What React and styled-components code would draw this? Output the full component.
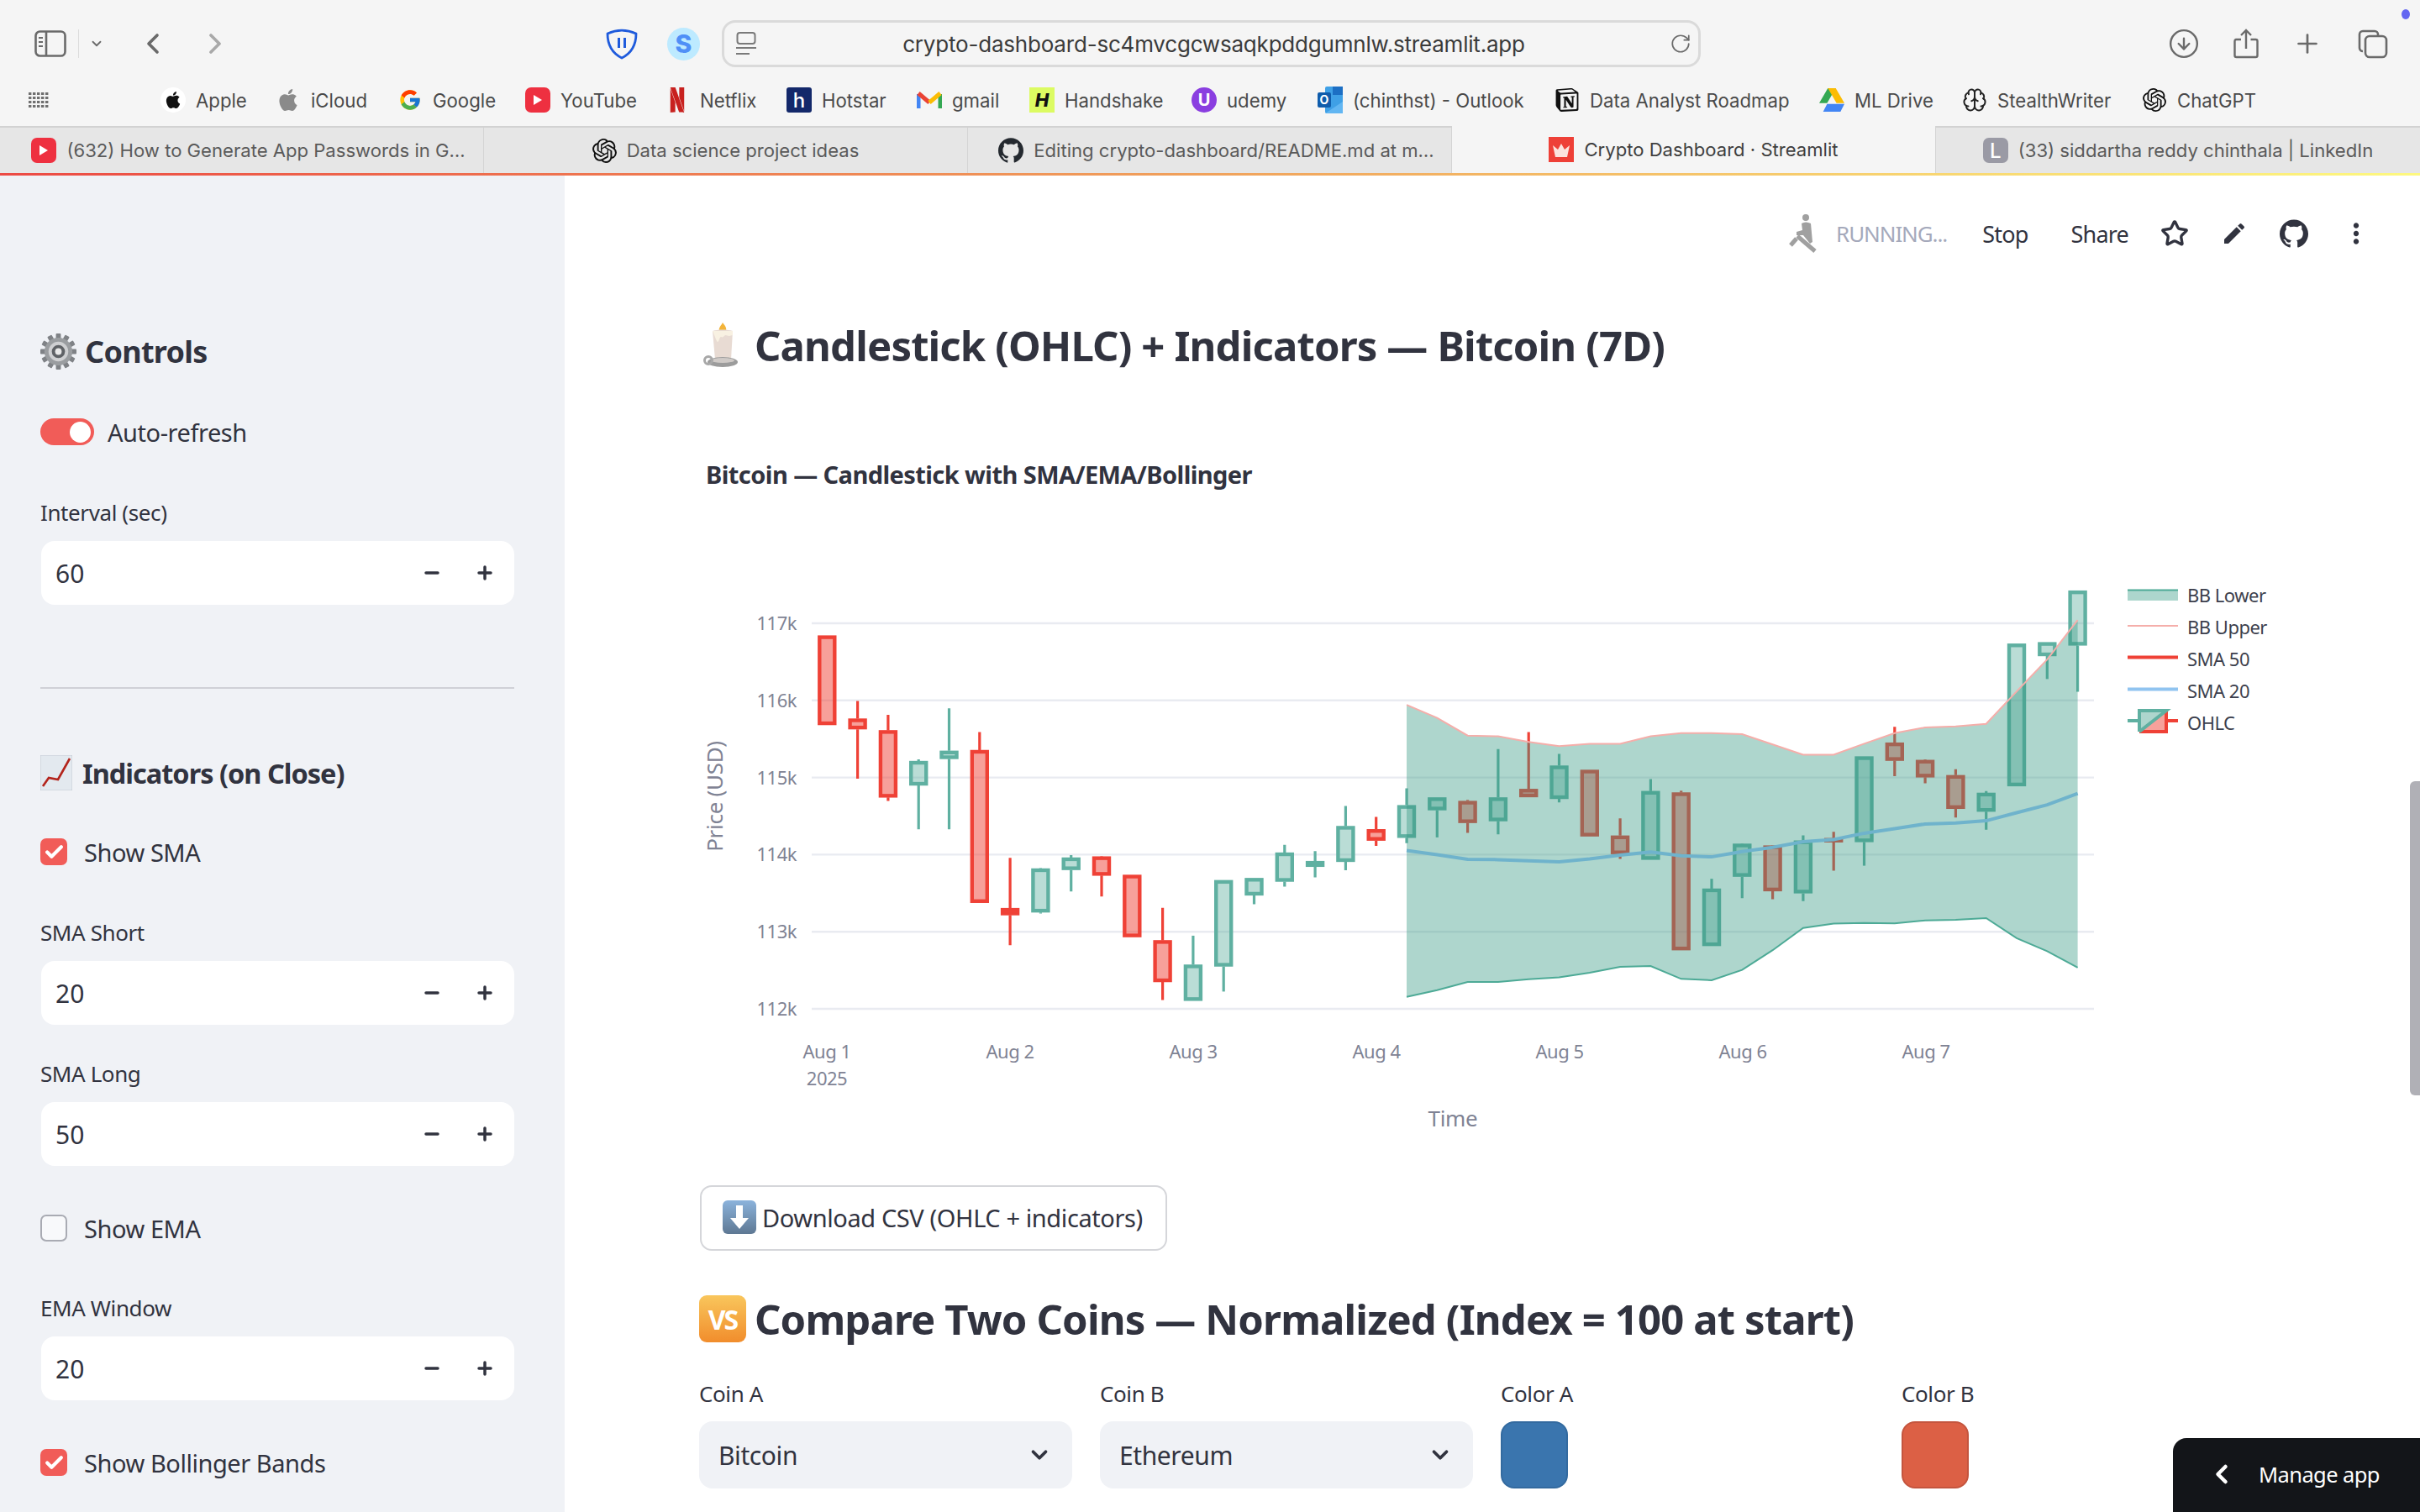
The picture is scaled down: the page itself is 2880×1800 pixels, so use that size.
import React from 'react'
import styled, { createGlobalStyle } from 'styled-components'
import { Star, Minus, Plus, ChevronDown, ChevronLeft, ChevronRight, RotateCw, CircleArrowDown, Brain, Check } from 'lucide-react'
import { SiApple, SiNetflix, SiNotion, SiOpenai, SiGithub } from 'react-icons/si'
import { FcGoogle } from 'react-icons/fc'
import { MdEdit, MdMoreVert } from 'react-icons/md'

const SANS = '"Noto Sans", "Open Sans", sans-serif'
const UI = 'Inter, "Liberation Sans", sans-serif'

const GlobalStyle = createGlobalStyle`
  html, body { margin: 0; padding: 0; background: #fff; overflow: hidden; }
  body { font-family: ${SANS}; color: #31333f; }
  * { box-sizing: border-box; }
`

const Page = styled.div`
  position: relative;
  width: 2880px;
  height: 1800px;
  overflow: hidden;
  display: flex;
  flex-direction: column;
`

/* browser chrome */
const Chrome = styled.div`
  background: #f5f5f5;
  font-family: ${UI};
`
const Toolbar = styled.div`
  height: 96px;
  padding: 8px 0 0 41px;
  display: flex;
  align-items: center;
`
const Slot = styled.div`
  margin-left: ${p => p.$ml || 0}px;
  display: flex;
  align-items: center;
  justify-content: ${p => (p.$end ? 'flex-end' : 'flex-start')};
  color: ${p => p.$color || '#6a6a6a'};
`
const VLine = styled.div`
  width: 1px;
  height: 34px;
  margin-left: 14px;
  background: #dcdcdc;
`
const SCircle = styled.div`
  width: 39px;
  height: 39px;
  border-radius: 50%;
  background: #bdeaff;
  color: #4f8ff7;
  font: 800 30px ${UI};
  display: flex;
  align-items: center;
  justify-content: center;
`
const AddressBar = styled.div`
  width: 1165px;
  height: 56px;
  margin-left: 26px;
  border: 3px solid #dadada;
  border-radius: 16px;
  display: grid;
  grid-template-columns: 40px 1fr 40px;
  align-items: center;
  padding: 0 8px 0 14px;
`
const Url = styled.div`
  text-align: center;
  font-size: 26px;
  letter-spacing: -0.2px;
  color: #3b3b3b;
`
const Bookmarks = styled.div`
  height: 54px;
  padding: 0 0 8px 34px;
  display: flex;
  align-items: center;
`
const Mark = styled.div`
  width: ${p => p.$w}px;
  display: flex;
  align-items: center;
  gap: 12px;
  font-size: 22.2px;
  color: #4a4a4a;
  white-space: nowrap;
`
const MarkIcon = styled.div`
  width: 30px;
  height: 32px;
  flex: none;
  display: flex;
  align-items: center;
  justify-content: center;
`
const AppleDot = styled.div`
  width: 30px;
  height: 30px;
  border-radius: 50%;
  background: #fff;
  color: #111;
  display: flex;
  align-items: center;
  justify-content: center;
`
const LetterTile = styled.div`
  width: ${p => p.$size || 30}px;
  height: ${p => p.$size || 30}px;
  border-radius: ${p => p.$round || '3px'};
  background: ${p => p.$bg};
  color: ${p => p.$fg || '#fff'};
  font: ${p => p.$font || '500 24px ' + UI};
  display: flex;
  align-items: center;
  justify-content: center;
  flex: none;
`
const Tabs = styled.div`
  display: flex;
  height: 56px;
`
const Tab = styled.div`
  flex: 0 0 576px;
  min-width: 0;
  display: flex;
  align-items: center;
  justify-content: center;
  gap: 12px;
  padding-left: ${p => (p.$shifted ? 16 : 0)}px;
  font-size: 22.1px;
  white-space: nowrap;
  color: ${p => (p.$active ? '#3f3f3f' : '#5a5a5a')};
  background: ${p => (p.$active ? '#f5f5f5' : '#e6e6e6')};
  border-top: ${p => (p.$active ? 'none' : '2px solid #d2d2d2')};
  border-right: 1px solid #d4d4d4;
  &:last-child { border-right: none; }
`
const Decoration = styled.div`
  height: 3px;
  background: linear-gradient(90deg, #ec4a44, #f0a25c 50%, #fdf880);
`

/* streamlit shell */
const Shell = styled.div`
  flex: 1;
  display: flex;
  min-height: 0;
`
const Sidebar = styled.aside`
  width: 672px;
  flex: none;
  padding: 185px 60px 0 48px;
  background: #f0f2f6;
`
const SideHeading = styled.h3`
  margin: ${p => p.$mt || 0}px 0 0;
  height: 48px;
  display: flex;
  align-items: center;
  gap: ${p => p.$gap || 8}px;
  font-size: ${p => p.$size}px;
  font-weight: 700;
  letter-spacing: ${p => p.$ls}px;
`
const ToggleRow = styled.div`
  margin-top: 54px;
  height: 36px;
  display: flex;
  align-items: center;
  gap: 16px;
  font-size: 29px;
  letter-spacing: -0.45px;
`
const ToggleTrack = styled.div`
  width: 64px;
  height: 32px;
  border-radius: 16px;
  background: #f15c58;
  display: flex;
  justify-content: flex-end;
  align-items: center;
  padding-right: 4px;
`
const ToggleThumb = styled.div`
  width: 25px;
  height: 25px;
  border-radius: 50%;
  background: #fff;
`
const FieldLabel = styled.div`
  margin-top: ${p => p.$mt || 0}px;
  height: 36px;
  line-height: 35px;
  font-size: 26px;
  letter-spacing: -0.4px;
`
const NumberBox = styled.div`
  margin: 15px 0 0 1px;
  height: 76px;
  border-radius: 16px;
  background: #fff;
  display: flex;
  align-items: center;
  padding: 0 23px 0 17px;
  font-size: 30px;
`
const NumberValue = styled.div`
  flex: 1;
`
const StepButtons = styled.div`
  display: flex;
  gap: 39px;
  color: #31333f;
`
const Rule = styled.hr`
  margin: 98px 0 0;
  border: none;
  height: 2px;
  background: #cfd0d6;
`
const CheckRow = styled.div`
  margin-top: ${p => p.$mt || 0}px;
  height: 36px;
  display: flex;
  align-items: center;
  gap: 20px;
  font-size: 29px;
  letter-spacing: -0.45px;
`
const CheckBox = styled.div`
  width: 32px;
  height: 32px;
  border-radius: 7px;
  flex: none;
  display: flex;
  align-items: center;
  justify-content: center;
  color: #fff;
  background: ${p => (p.$on ? '#f15c58' : '#f8f9fb')};
  border: ${p => (p.$on ? 'none' : '2px solid #a9abb3')};
`
const Main = styled.main`
  flex: 1;
  min-width: 0;
  padding: 41px 0 0 160px;
`
const StatusBar = styled.div`
  height: 56px;
  display: flex;
  align-items: center;
  justify-content: flex-end;
  padding-right: 57px;
  font-size: 27px;
  letter-spacing: -0.8px;
`
const RunningText = styled.span`
  margin: 0 42px 0 21px;
  color: #a5a9bb;
  font-size: 26px;
  letter-spacing: -1.1px;
`
const BarAction = styled.span`
  margin-left: ${p => p.$ml || 0}px;
  display: flex;
  align-items: center;
`
const H2 = styled.h2`
  margin: ${p => p.$mt || 0}px 0 0;
  height: 70px;
  display: flex;
  align-items: center;
  gap: ${p => p.$gap || 10}px;
  font-size: 49px;
  font-weight: 700;
  letter-spacing: -0.85px;
  white-space: nowrap;
`
const EmojiSlot = styled.span`
  margin-left: ${p => p.$ml || 0}px;
  display: flex;
`
const ChartSvg = styled.svg`
  display: block;
  margin-top: 94px;
  width: 1888px;
  height: 810px;
  font-family: ${SANS};
`
const DownloadButton = styled.div`
  margin: 61px 0 0 1px;
  width: 556px;
  height: 78px;
  border: 2px solid #d5d6da;
  border-radius: 14px;
  display: flex;
  align-items: center;
  padding: 0 0 2px 25px;
  gap: 7px;
  font-size: 29px;
  letter-spacing: -0.4px;
  white-space: nowrap;
`
const PickerGrid = styled.div`
  margin-top: 38px;
  display: grid;
  grid-template-columns: repeat(4, 444px);
  column-gap: 33px;
`
const PickerLabel = styled.div`
  height: 36px;
  line-height: 33px;
  font-size: 26px;
  letter-spacing: -0.4px;
`
const SelectBox = styled.div`
  margin-top: 13px;
  height: 80px;
  border-radius: 16px;
  background: #f0f2f6;
  display: flex;
  align-items: center;
  justify-content: space-between;
  padding: 0 24px 0 23px;
  font-size: 30px;
  letter-spacing: -0.4px;
`
const Swatch = styled.div`
  margin-top: 13px;
  width: 80px;
  height: 80px;
  border-radius: 16px;
  background: ${p => p.$color};
  border: 2px solid ${p => p.$edge};
`
const ManageApp = styled.div`
  position: absolute;
  right: 0;
  bottom: 0;
  width: 294px;
  height: 88px;
  padding: 0 0 2px 40px;
  border-top-left-radius: 16px;
  background: #131519;
  color: #fff;
  display: flex;
  align-items: center;
  gap: 26px;
  font-size: 25.5px;
  letter-spacing: -0.6px;
`
const ScrollThumb = styled.div`
  position: absolute;
  right: 0;
  top: 930px;
  width: 12px;
  height: 374px;
  border-radius: 6px 0 0 6px;
  background: #b0b0b6;
`
const NotifyDot = styled.div`
  position: absolute;
  top: 11px;
  right: 12px;
  width: 10px;
  height: 12px;
  border-radius: 50%;
  background: #6366f1;
`
const VsBadge = styled.div`
  width: 56px;
  height: 56px;
  flex: none;
  border-radius: 9px;
  background: linear-gradient(180deg, #f9c65c, #f18d2c);
  color: #fff;
  font-size: 32px;
  font-weight: 700;
  letter-spacing: -2px;
  display: flex;
  align-items: center;
  justify-content: center;
`

/* browser icons */
const SidebarGlyph = () => (
  <svg width="38" height="32" viewBox="0 0 38 32" fill="none" stroke="#6a6a6a" strokeWidth="2.6">
    <rect x="1.5" y="1.5" width="35" height="29" rx="5" />
    <path d="M14 2v28" />
    <path d="M5 9h5M5 14h5M5 19h5" strokeWidth="2" />
  </svg>
)
const ShieldGlyph = () => (
  <svg width="38" height="38" viewBox="0 0 38 38" fill="none" stroke="#1f5bdc" strokeWidth="2.8">
    <path d="M2 7C13 2 25 2 36 7 36 20 31 30 19 36 7 30 2 20 2 7z" strokeLinejoin="round" />
    <path d="M15.5 12v12M22.5 12v12" strokeWidth="3" />
  </svg>
)
const PageGlyph = () => (
  <svg width="24" height="28" viewBox="0 0 24 28" fill="none" stroke="#7a7a7a" strokeWidth="2">
    <rect x="1.5" y="1" width="21" height="13" rx="3" />
    <path d="M0 19h24M0 26h16" />
  </svg>
)
const ShareGlyph = () => (
  <svg width="30" height="36" viewBox="0 0 30 36" fill="none" stroke="#6a6a6a" strokeWidth="2.4">
    <path d="M9 13H3a2 2 0 0 0-1.5 2v17a2 2 0 0 0 2 2h23a2 2 0 0 0 2-2V15a2 2 0 0 0-2-2h-6" />
    <path d="M15 24V2M9 8l6-6 6 6" />
  </svg>
)
const TabsGlyph = () => (
  <svg width="36" height="35" viewBox="0 0 36 35" fill="none" stroke="#6a6a6a" strokeWidth="2.6">
    <path d="M6 26a4 4 0 0 1-4-4V6a4 4 0 0 1 4-4h14a4 4 0 0 1 4 4v2" />
    <rect x="9" y="8" width="25" height="25" rx="5" />
  </svg>
)
const GridGlyph = () => (
  <svg width="24" height="18" viewBox="0 0 24 18" fill="#6f6f6f">
    {[0, 5, 10, 15].map(y => [0, 5, 10, 15, 20].map(x => <rect key={x + '-' + y} x={x} y={y} width="3.4" height="3" />))}
  </svg>
)
const YouTubeTile = () => (
  <LetterTile $bg="#ee3040" $round="7px">
    <svg width="12" height="14" viewBox="0 0 12 14"><path d="M1 1l10 6-10 6z" fill="#fff" /></svg>
  </LetterTile>
)
const GmailGlyph = () => (
  <svg width="30" height="24" viewBox="0 0 30 24" fill="none">
    <path d="M2 22V5" stroke="#4285f4" strokeWidth="5" />
    <path d="M28 22V5" stroke="#34a853" strokeWidth="5" />
    <path d="M2 4l13 11" stroke="#ea4335" strokeWidth="5" />
    <path d="M28 4L15 15" stroke="#fbbc04" strokeWidth="5" />
  </svg>
)
const OutlookGlyph = () => (
  <svg width="30" height="32" viewBox="0 0 30 32">
    <rect x="9" y="0" width="21" height="32" rx="2" fill="#3fa0e6" />
    <rect x="18" y="0" width="12" height="10" fill="#1c6fc4" />
    <path d="M9 32l21-14v14z" fill="#62b6f2" />
    <rect x="0" y="7" width="16" height="18" rx="2" fill="#0f5cab" />
    <text x="8" y="21" fontSize="14" fontWeight="700" textAnchor="middle" fill="#fff">O</text>
  </svg>
)
const DriveGlyph = () => (
  <svg width="32" height="30" viewBox="0 0 32 30">
    <path d="M11 0h10L10 19H0z" fill="#34a853" />
    <path d="M21 0l11 19H22L11 0z" fill="#fbbc04" />
    <path d="M5 30l5-10h22l-5 10z" fill="#4285f4" />
  </svg>
)
const CrownTile = () => (
  <LetterTile $bg="#ee4037" $round="0">
    <svg width="24" height="22" viewBox="0 0 24 22"><path d="M12 4l4 7 6-5-3 14H5L2 6l6 5z" fill="#fbe3dd" /></svg>
  </LetterTile>
)
const GithubTab = () => <SiGithub size={30} color="#24292f" />

/* emoji stand-ins */
const GearEmoji = () => (
  <svg width="43" height="43" viewBox="0 0 44 44">
    <g fill="#7f8286">
      {[...Array(12)].map((_, i) => (
        <rect key={i} x="19" y="0" width="6" height="8" rx="1" transform={`rotate(${i * 30} 22 22)`} />
      ))}
    </g>
    <circle cx="22" cy="22" r="17" fill="#9a9da0" />
    <circle cx="22" cy="22" r="12" fill="#cfd0d2" />
    <circle cx="22" cy="22" r="8" fill="#5f6266" />
    <circle cx="22" cy="22" r="4" fill="#e9e9e9" />
  </svg>
)
const ChartEmoji = () => (
  <svg width="38" height="42" viewBox="0 0 38 42">
    <rect width="38" height="42" fill="#e3e9ef" />
    <path d="M0 0h38v42H0z" fill="none" stroke="#c3cad3" />
    <path d="M3 37l7-10 11 2L35 4" fill="none" stroke="#b3241c" strokeWidth="2.6" />
  </svg>
)
const CandleEmoji = () => (
  <svg width="42" height="56" viewBox="0 0 42 56">
    <path d="M23 1c3 4 5 6 4 10h-8c-1-4 2-6 4-10z" fill="#f3b43a" />
    <path d="M11 11c6-2 18-2 24 0l-2 34H14z" fill="#e8dbd3" />
    <path d="M11 11h24v5c-2 0-3 1-4 1-2 0-3-1-5-1-2 2-3 3-5 2-2 0-2 6-4 6-1 0-3-6-6-13z" fill="#f8f1e2" />
    <ellipse cx="23" cy="48" rx="18" ry="6" fill="#9c9c9c" />
    <ellipse cx="23" cy="46" rx="14" ry="3" fill="#cfcac7" />
    <circle cx="6" cy="46" r="4.5" fill="none" stroke="#a8a8a8" strokeWidth="3" />
  </svg>
)
const ArrowEmoji = () => (
  <svg width="40" height="40" viewBox="0 0 40 40">
    <defs>
      <linearGradient id="dl" x1="0" y1="0" x2="0" y2="1">
        <stop offset="0" stopColor="#8bb3dc" />
        <stop offset="1" stopColor="#5e7893" />
      </linearGradient>
    </defs>
    <rect width="40" height="40" rx="6" fill="url(#dl)" />
    <path d="M16 6h8v15h7L20 34 9 21h7z" fill="#fff" />
  </svg>
)
const RunnerGlyph = () => (
  <svg width="36" height="48" viewBox="0 0 36 48" fill="#a0a0a0" stroke="none">
    <circle cx="21" cy="5" r="4" />
    <path d="M16 12q5-3 11 0l2 22-3 2-8-10-8 0 0-4 7-2z" />
    <path d="M11 27l21 18M3 38l7-8" stroke="#a0a0a0" strokeWidth="5" fill="none" />
  </svg>
)

const yz = z => z / 2.376 + 680
const xi = i => 984.3 + 36.3 * i

// candles: [high, top, bottom, low, up?] read off the reference in crop rows
const CANDLES = [
  [182, 182, 435, 435, 0], [367, 417, 447, 587, 0], [406, 450, 640, 650, 0], [532, 537, 606, 730, 1],
  [388, 508, 531, 730, 1], [455, 506, 938, 938, 0], [811, 953, 973, 1058, 0], [840, 841, 965, 968, 1],
  [803, 810, 845, 906, 1], [806, 807, 861, 920, 0], [859, 859, 1035, 1035, 0], [952, 1044, 1162, 1213, 0],
  [1031, 1113, 1215, 1215, 1], [874, 874, 1118, 1189, 1], [868, 868, 917, 942, 1], [774, 796, 878, 892, 1],
  [792, 820, 836, 866, 1], [664, 721, 822, 846, 1], [695, 730, 762, 777, 0], [614, 662, 754, 769, 1],
  [640, 640, 676, 753, 1], [647, 650, 712, 740, 0], [503, 640, 707, 744, 1], [455, 616, 639, 639, 0],
  [517, 550, 644, 654, 1], [562, 562, 750, 750, 0], [699, 748, 800, 814, 0], [588, 622, 816, 816, 1],
  [621, 626, 1072, 1072, 0], [870, 898, 1060, 1060, 1], [770, 771, 864, 925, 1], [775, 776, 905, 928, 0],
  [747, 762, 911, 933, 1], [737, 755, 764, 847, 0], [524, 524, 766, 833, 1], [440, 485, 536, 580, 0],
  [532, 534, 583, 600, 0], [560, 577, 672, 697, 0], [622, 627, 680, 731, 1], [205, 205, 608, 608, 1],
  [201, 201, 240, 305, 1], [55, 55, 210, 341, 1],
]
const BB_UP = [378, 415, 465, 467, 483, 495, 488, 488, 467, 458, 458, 461, 490, 519, 519, 488, 458, 442, 439, 432, 340, 250, 138]
const BB_LOW = [1204, 1185, 1162, 1162, 1154, 1149, 1136, 1119, 1117, 1153, 1157, 1128, 1072, 1009, 997, 995, 996, 988, 986, 981, 1038, 1075, 1121]
const SMA20 = [790, 802, 815, 816, 819, 822, 814, 803, 794, 805, 808, 793, 781, 765, 759, 741, 728, 715, 712, 706, 683, 661, 629]
const line = arr => arr.map((z, k) => `${xi(k + 19).toFixed(1)},${yz(z).toFixed(1)}`).join(' ')
const bandPts = line(BB_UP) + ' ' + BB_LOW.map((z, k) => `${xi(k + 19).toFixed(1)},${yz(z).toFixed(1)}`).reverse().join(' ')

const GREEN = '#5fb0a1'
const RED = '#ef4136'
const TICK = '#7f8394'

const Candle = ({ i, d }) => {
  const [hi, top, bot, lo, up] = d
  const x = xi(i)
  const c = up ? GREEN : RED
  return (
    <g>
      <path d={`M${x} ${yz(hi)}V${yz(top)}M${x} ${yz(bot)}V${yz(lo)}`} stroke={c} strokeWidth="3.2" />
      <rect x={x - 9} y={yz(top) + 2} width="18" height={Math.max(yz(bot) - yz(top) - 4, 1)} stroke={c} strokeWidth="4.4"
        fill={up ? 'rgba(90,175,158,.42)' : 'rgba(239,65,54,.5)'} />
    </g>
  )
}

const PriceChart = () => {
  const prices = [117, 116, 115, 114, 113, 112]
  const days = ['Aug 1', 'Aug 2', 'Aug 3', 'Aug 4', 'Aug 5', 'Aug 6', 'Aug 7']
  const legend = ['BB Lower', 'BB Upper', 'SMA 50', 'SMA 20', 'OHLC']
  return (
    <ChartSvg viewBox="832 540 1888 810">
      <text x="840" y="576" fontSize="29" fontWeight="700" fill="#31333f" letterSpacing="-0.57">Bitcoin — Candlestick with SMA/EMA/Bollinger</text>
      {prices.map((p, k) => {
        const y = 742 + k * 91.8
        return (
          <g key={p}>
            <path d={`M966 ${y}H2492`} stroke="#e9ebf1" strokeWidth="2.4" />
            <text x="948" y={y + 8} fontSize="22" fill={TICK} textAnchor="end" letterSpacing="-0.5">{p}k</text>
          </g>
        )
      })}
      {days.map((d, k) => (
        <text key={d} x={984 + k * 218} y="1260" fontSize="22" fill={TICK} textAnchor="middle" letterSpacing="-0.5">{d}</text>
      ))}
      <text x="984" y="1292" fontSize="22" fill={TICK} textAnchor="middle" letterSpacing="-0.5">2025</text>
      <text x="1729" y="1341" fontSize="26" fill={TICK} textAnchor="middle" letterSpacing="-0.3">Time</text>
      <text transform="translate(860 948) rotate(-90)" fontSize="26" fill={TICK} textAnchor="middle" letterSpacing="-0.3">Price (USD)</text>

      {CANDLES.map((d, i) => <Candle key={i} i={i} d={d} />)}

      <polygon points={bandPts} fill="rgba(52,152,130,.4)" />
      <polyline points={line(BB_UP)} fill="none" stroke="#f5aeaa" strokeWidth="2" />
      <polyline points={line(BB_LOW)} fill="none" stroke="#4daa96" strokeWidth="2" />
      <polyline points={line(SMA20)} fill="none" stroke="#6fb3cc" strokeWidth="4" />

      {legend.map((t, k) => (
        <text key={t} x="2603" y={717 + k * 38} fontSize="22" fill="#3c3f4d" letterSpacing="-0.5">{t}</text>
      ))}
      <rect x="2532" y="702" width="60" height="13" fill="#add6cd" />
      <path d="M2532 702.5H2592" stroke="#4daa96" strokeWidth="2" />
      <path d="M2532 745H2592" stroke="#f5aeaa" strokeWidth="2" />
      <path d="M2532 782.5H2592" stroke={RED} strokeWidth="4" />
      <path d="M2532 820.5H2592" stroke="#90c4f0" strokeWidth="4" />
      <path d="M2532 858H2546" stroke={GREEN} strokeWidth="4" />
      <path d="M2578 858H2592" stroke={RED} strokeWidth="4" />
      <polygon points="2546,871 2578,871 2578,846" fill="#f6a19b" />
      <polygon points="2546,871 2546,846 2578,846" fill="#add6cd" />
      <path d="M2546 871H2578V846" fill="none" stroke={RED} strokeWidth="4" />
      <path d="M2546 871V846H2578L2546 871" fill="none" stroke={GREEN} strokeWidth="4" />
    </ChartSvg>
  )
}

const NumberField = ({ label, value, mt }) => (
  <>
    <FieldLabel $mt={mt}>{label}</FieldLabel>
    <NumberBox>
      <NumberValue>{value}</NumberValue>
      <StepButtons>
        <Minus size={24} strokeWidth={3.5} />
        <Plus size={24} strokeWidth={3.5} />
      </StepButtons>
    </NumberBox>
  </>
)

const Tick = ({ on, label, mt }) => (
  <CheckRow $mt={mt}>
    <CheckBox $on={on}>{on && <Check size={25} strokeWidth={4} />}</CheckBox>
    {label}
  </CheckRow>
)

const MARKS = [
  { w: 137, label: 'Apple', icon: <AppleDot><SiApple size={20} /></AppleDot> },
  { w: 145, label: 'iCloud', icon: <SiApple size={26} color="#8a8a8a" /> },
  { w: 152, label: 'Google', icon: <FcGoogle size={28} /> },
  { w: 166, label: 'YouTube', icon: <YouTubeTile /> },
  { w: 145, label: 'Netflix', icon: <SiNetflix size={32} color="#c8211f" /> },
  { w: 155, label: 'Hotstar', icon: <LetterTile $bg="#13286a">h</LetterTile> },
  { w: 134, label: 'gmail', icon: <GmailGlyph /> },
  { w: 193, label: 'Handshake', icon: <LetterTile $bg="#dcfb62" $fg="#111" $round="0" $font={`italic 800 22px ${UI}`}>H</LetterTile> },
  { w: 150, label: 'udemy', icon: <LetterTile $bg="#8a3ee0" $round="50%" $font={`700 20px ${UI}`}>U</LetterTile> },
  { w: 282, label: '(chinthst) - Outlook', icon: <OutlookGlyph /> },
  { w: 315, label: 'Data Analyst Roadmap', icon: <SiNotion size={28} color="#111" /> },
  { w: 170, label: 'ML Drive', icon: <DriveGlyph /> },
  { w: 214, label: 'StealthWriter', icon: <Brain size={30} color="#222" strokeWidth={1.6} /> },
  { w: 140, label: 'ChatGPT', icon: <SiOpenai size={28} color="#111" /> },
]

const TABS = [
  { label: '(632) How to Generate App Passwords in G…', icon: <YouTubeTile />, shifted: true },
  { label: 'Data science project ideas', icon: <SiOpenai size={29} color="#111" /> },
  { label: 'Editing crypto-dashboard/README.md at m…', icon: <GithubTab />, shifted: true },
  { label: 'Crypto Dashboard · Streamlit', icon: <CrownTile />, active: true },
  { label: '(33) siddartha reddy chinthala | LinkedIn', icon: <LetterTile $bg="#9a9aa5" $round="7px">L</LetterTile> },
]

export default function App() {
  return (
    <Page>
      <GlobalStyle />
      <Chrome>
        <Toolbar>
          <Slot><SidebarGlyph /></Slot>
          <VLine />
          <Slot $ml={12}><ChevronDown size={18} strokeWidth={2.4} /></Slot>
          <Slot $ml={38}><ChevronLeft size={40} strokeWidth={2.2} /></Slot>
          <Slot $ml={34} $color="#a9a9a9"><ChevronRight size={40} strokeWidth={2.2} /></Slot>
          <Slot $ml={445}><ShieldGlyph /></Slot>
          <Slot $ml={35}><SCircle>S</SCircle></Slot>
          <AddressBar>
            <PageGlyph />
            <Url>crypto-dashboard-sc4mvcgcwsaqkpddgumnlw.streamlit.app</Url>
            <Slot $end><RotateCw size={26} strokeWidth={1.6} /></Slot>
          </AddressBar>
          <Slot $ml={556}><CircleArrowDown size={38} strokeWidth={1.5} /></Slot>
          <Slot $ml={40}><ShareGlyph /></Slot>
          <Slot $ml={40}><Plus size={36} strokeWidth={1.8} /></Slot>
          <Slot $ml={42}><TabsGlyph /></Slot>
        </Toolbar>
        <Bookmarks>
          <Slot><GridGlyph /></Slot>
          <Slot $ml={133} />
          {MARKS.map(m => (
            <Mark key={m.label} $w={m.w}>
              <MarkIcon>{m.icon}</MarkIcon>
              {m.label}
            </Mark>
          ))}
        </Bookmarks>
        <Tabs>
          {TABS.map(t => (
            <Tab key={t.label} $active={t.active} $shifted={t.shifted}>
              {t.icon}
              {t.label}
            </Tab>
          ))}
        </Tabs>
        <Decoration />
      </Chrome>

      <Shell>
        <Sidebar>
          <SideHeading $size={36} $ls={-0.7} $gap={10}><GearEmoji /> Controls</SideHeading>
          <ToggleRow>
            <ToggleTrack><ToggleThumb /></ToggleTrack>
            Auto-refresh
          </ToggleRow>
          <NumberField label="Interval (sec)" value="60" mt={61} />
          <Rule />
          <SideHeading $mt={76} $size={32.5} $ls={-1} $gap={12}><ChartEmoji /> Indicators (on Close)</SideHeading>
          <Tick on label="Show SMA" mt={52} />
          <NumberField label="SMA Short" value="20" mt={61} />
          <NumberField label="SMA Long" value="50" mt={41} />
          <Tick label="Show EMA" mt={56} />
          <NumberField label="EMA Window" value="20" mt={60} />
          <Tick on label="Show Bollinger Bands" mt={56} />
        </Sidebar>

        <Main>
          <StatusBar>
            <RunnerGlyph />
            <RunningText>RUNNING...</RunningText>
            <BarAction>Stop</BarAction>
            <BarAction $ml={51}>Share</BarAction>
            <BarAction $ml={38}><Star size={34} strokeWidth={2.4} /></BarAction>
            <BarAction $ml={38}><MdEdit size={32} /></BarAction>
            <BarAction $ml={38}><SiGithub size={34} /></BarAction>
            <BarAction $ml={38}><MdMoreVert size={38} /></BarAction>
          </StatusBar>
          <H2 $mt={70} $gap={19}><EmojiSlot $ml={5}><CandleEmoji /></EmojiSlot> Candlestick (OHLC) + Indicators — Bitcoin (7D)</H2>
          <PriceChart />
          <DownloadButton><ArrowEmoji /> Download CSV (OHLC + indicators)</DownloadButton>
          <H2 $mt={46}><VsBadge>VS</VsBadge> Compare Two Coins — Normalized (Index = 100 at start)</H2>
          <PickerGrid>
            <div>
              <PickerLabel>Coin A</PickerLabel>
              <SelectBox>Bitcoin <ChevronDown size={30} strokeWidth={3} /></SelectBox>
            </div>
            <div>
              <PickerLabel>Coin B</PickerLabel>
              <SelectBox>Ethereum <ChevronDown size={30} strokeWidth={3} /></SelectBox>
            </div>
            <div>
              <PickerLabel>Color A</PickerLabel>
              <Swatch $color="#3a75ae" $edge="#336a9f" />
            </div>
            <div>
              <PickerLabel>Color B</PickerLabel>
              <Swatch $color="#dc6045" $edge="#c4553e" />
            </div>
          </PickerGrid>
        </Main>
      </Shell>

      <ScrollThumb />
      <NotifyDot />
      <ManageApp>
        <ChevronLeft size={36} strokeWidth={3} />
        Manage app
      </ManageApp>
    </Page>
  )
}
